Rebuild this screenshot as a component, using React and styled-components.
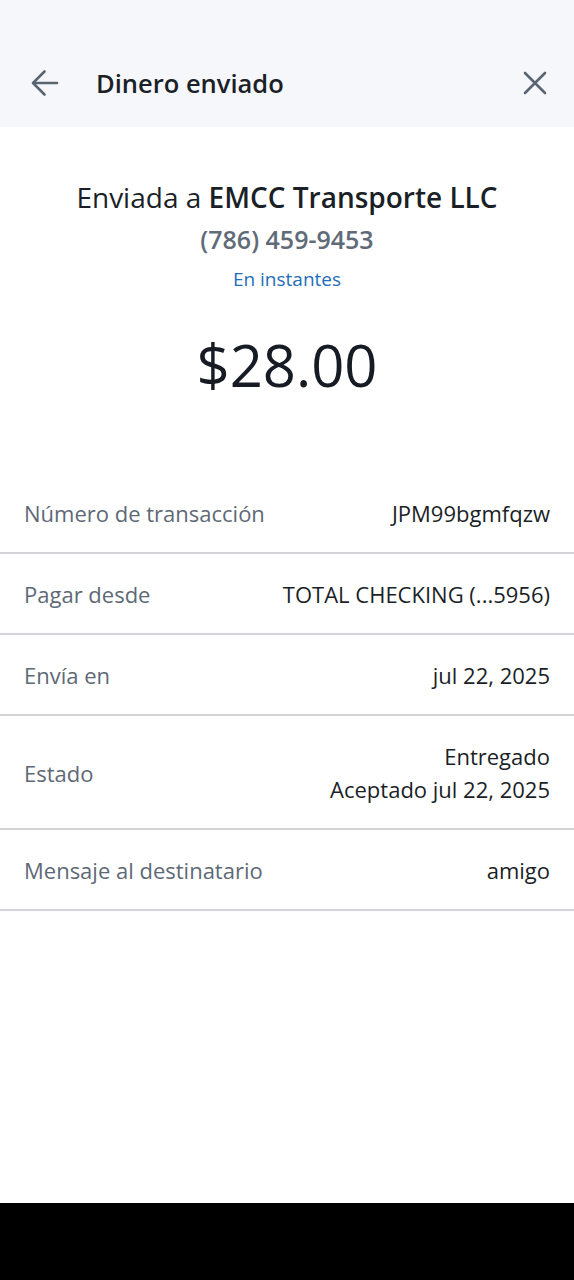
import React from 'react'
import styled, { createGlobalStyle } from 'styled-components'

const GlobalStyle = createGlobalStyle`
  html, body {
    margin: 0;
    padding: 0;
    background: #fff;
  }
  body {
    font-family: 'Open Sans', 'Noto Sans', sans-serif;
    -webkit-font-smoothing: antialiased;
  }
`

const Page = styled.div`
  display: flex;
  flex-direction: column;
  min-height: 1280px;
  background: #fff;
`

const Header = styled.header`
  flex: 0 0 127px;
  display: flex;
  align-items: center;
  padding: 38px 22px 0 28px;
  background: #f5f7fa;
  box-sizing: border-box;
`

const IconButton = styled.button`
  display: flex;
  align-items: center;
  justify-content: center;
  width: 34px;
  height: 34px;
  padding: 0;
  margin: 0;
  border: 0;
  background: none;
  color: #5a6572;
  cursor: pointer;
`

const Title = styled.h1`
  flex: 1;
  margin: 0 0 0 34px;
  font-size: 25.5px;
  line-height: 34px;
  font-weight: 600;
  color: #1b1f27;
`

const Body = styled.main`
  flex: 1;
  display: flex;
  flex-direction: column;
`

const Summary = styled.section`
  display: flex;
  flex-direction: column;
  align-items: center;
  padding: 50px 16px 68px;
`

const Recipient = styled.div`
  font-size: 28px;
  line-height: 40px;
  color: #1b1f27;

  strong {
    font-weight: 600;
  }
`

const Phone = styled.div`
  margin-top: 4px;
  font-size: 25px;
  line-height: 36px;
  font-weight: 600;
  color: #5f6b78;
`

const Speed = styled.div`
  margin-top: 8px;
  font-size: 19px;
  line-height: 28px;
  color: #1f6eb8;
`

const Amount = styled.div`
  margin-top: 32px;
  font-size: 58px;
  line-height: 80px;
  color: #161b24;
`

const DetailList = styled.dl`
  margin: 0;
  display: flex;
  flex-direction: column;
`

const Row = styled.div`
  display: flex;
  align-items: center;
  justify-content: space-between;
  gap: 16px;
  padding: 24px 24px 22px;
  border-bottom: 2px solid #d2d4d7;
  font-size: 22px;
  line-height: 33px;
`

const Label = styled.dt`
  margin: 0;
  color: #5e6976;
`

const Value = styled.dd`
  margin: 0;
  text-align: right;
  color: #1b1f27;
`

const NavBar = styled.div`
  flex: 0 0 77px;
  background: #000;
`

const ArrowLeft = () => (
  <svg width="30" height="30" viewBox="0 0 30 30" fill="none" stroke="currentColor"
    strokeWidth="2.6" strokeLinecap="round" strokeLinejoin="round">
    <path d="M27 15H3.5" />
    <path d="M14.5 3.5L3 15l11.5 11.5" />
  </svg>
)

const CloseIcon = () => (
  <svg width="24" height="24" viewBox="0 0 24 24" fill="none" stroke="currentColor"
    strokeWidth="2.6" strokeLinecap="round">
    <path d="M2 2l20 20M22 2L2 22" />
  </svg>
)

const details = [
  { label: 'Número de transacción', value: ['JPM99bgmfqzw'] },
  { label: 'Pagar desde', value: ['TOTAL CHECKING (...5956)'] },
  { label: 'Envía en', value: ['jul 22, 2025'] },
  { label: 'Estado', value: ['Entregado', 'Aceptado jul 22, 2025'] },
  { label: 'Mensaje al destinatario', value: ['amigo'] },
]

export default function App() {
  return (
    <Page>
      <GlobalStyle />
      <Header>
        <IconButton aria-label="Atrás"><ArrowLeft /></IconButton>
        <Title>Dinero enviado</Title>
        <IconButton aria-label="Cerrar"><CloseIcon /></IconButton>
      </Header>
      <Body>
        <Summary>
          <Recipient>Enviada a <strong>EMCC Transporte LLC</strong></Recipient>
          <Phone>(786) 459-9453</Phone>
          <Speed>En instantes</Speed>
          <Amount>$28.00</Amount>
        </Summary>
        <DetailList>
          {details.map(d => (
            <Row key={d.label}>
              <Label>{d.label}</Label>
              <Value>
                {d.value.map(line => <div key={line}>{line}</div>)}
              </Value>
            </Row>
          ))}
        </DetailList>
      </Body>
      <NavBar />
    </Page>
  )
}
